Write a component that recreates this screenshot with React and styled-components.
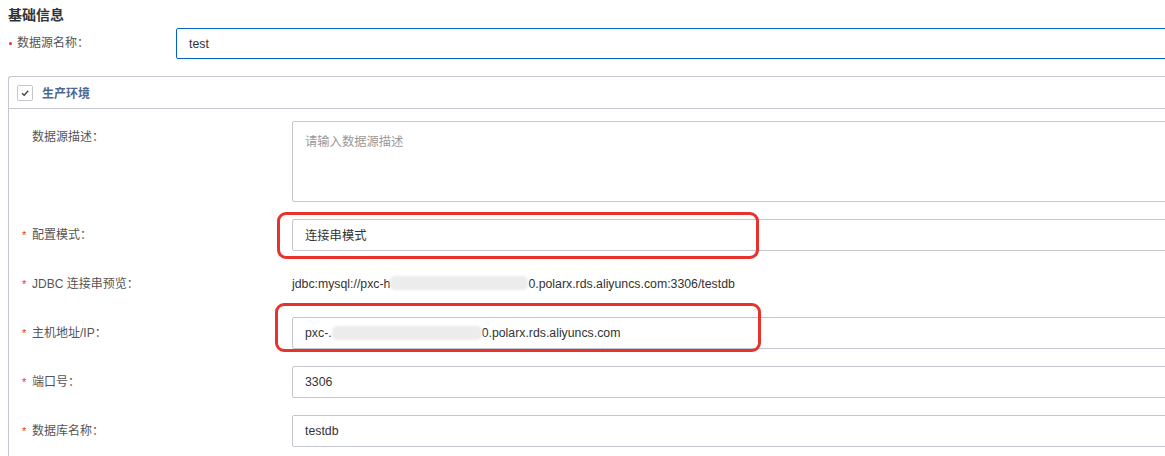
import styled, { createGlobalStyle } from 'styled-components';

const GlobalStyle = createGlobalStyle`
    html, body {
        margin: 0;
        padding: 0;
        overflow: hidden;
        background: #ffffff;
    }
    body {
        font-family: "Liberation Sans", "Noto Sans CJK SC", sans-serif;
        font-size: 12px;
        color: #333333;
    }
`;

const Page = styled.div`
    width: 1220px;
    padding: 5px 0 0 8px;
    box-sizing: border-box;
`;

const SectionTitle = styled.h3`
    margin: 0;
    font-size: 14px;
    line-height: 20px;
    font-weight: 700;
    color: #333333;
`;

const TopRow = styled.div`
    display: flex;
    align-items: flex-start;
    margin-top: 3px;
`;

const TopLabel = styled.div`
    width: 168px;
    line-height: 31px;
    color: #555555;
    display: flex;
    align-items: center;
`;

const Dot = styled.span`
    width: 3px;
    height: 3px;
    border-radius: 50%;
    background: #e8322c;
    margin: 0 5px 0 1px;
`;

const Input = styled.div`
    flex: 1;
    height: ${({ $h }) => $h || 32}px;
    box-sizing: border-box;
    border: 1px solid ${({ $focus }) => ($focus ? '#0066cc' : '#c4c6cf')};
    border-radius: 2px;
    padding: ${({ $top }) => ($top ? '10px 12px' : '0 12px')};
    display: flex;
    align-items: ${({ $top }) => ($top ? 'flex-start' : 'center')};
    font-size: 12.3px;
    color: ${({ $placeholder }) => ($placeholder ? '#999999' : '#333333')};
    background: #ffffff;
    white-space: pre;
`;

const Panel = styled.div`
    margin-top: 17px;
    border: 1px solid #c4c6cf;
    border-right: none;
    border-bottom: none;
    border-radius: 3px 0 0 0;
    padding-bottom: 20px;
`;

const PanelHeader = styled.div`
    height: 31px;
    border-bottom: 1px solid #c4c6cf;
    display: flex;
    align-items: center;
    padding-left: 8px;
    gap: 9px;
`;

const CheckBox = styled.span`
    width: 16px;
    height: 16px;
    box-sizing: border-box;
    border: 1px solid #c4c6cf;
    border-radius: 2px;
    display: flex;
    align-items: center;
    justify-content: center;
    background: #ffffff;
`;

const PanelTitle = styled.span`
    font-size: 12px;
    font-weight: 700;
    color: #4b6a93;
    font-family: "Noto Sans CJK SC", sans-serif;
`;

const PanelBody = styled.div`
    display: flex;
    flex-direction: column;
    gap: 17px;
    padding-top: 12px;
`;

const Row = styled.div`
    display: flex;
    align-items: flex-start;
`;

const Label = styled.div`
    width: 270px;
    padding-left: 13px;
    line-height: 32px;
    color: #555555;
    display: flex;
`;

const Star = styled.span`
    width: 10px;
    color: #e8322c;
    font-size: 11px;
`;

const Control = styled.div`
    flex: 1;
    position: relative;
    display: flex;
`;

const PlainText = styled.div`
    line-height: 32px;
    font-size: 12.3px;
    color: #333333;
    white-space: nowrap;
`;

const Masked = styled.span`
    display: inline-block;
    width: ${({ $w }) => $w}px;
    height: 14px;
    vertical-align: -2px;
    background: #ececec;
    border-radius: 5px;
    filter: blur(1px);
`;

const Highlight = styled.div`
    position: absolute;
    left: ${({ $l }) => $l}px;
    top: ${({ $t }) => $t}px;
    width: ${({ $w }) => $w}px;
    height: ${({ $h }) => $h}px;
    box-sizing: border-box;
    border: 3px solid #e8322c;
    border-radius: 9px;
    pointer-events: none;
`;

const Check = () => (
    <svg width="10" height="10" viewBox="0 0 10 10">
        <path d="M2 5.2 L4.2 7.3 L8.2 2.8" fill="none" stroke="#444" strokeWidth="1.4" />
    </svg>
);

const FormRow = ({ label, required, children }) => (
    <Row>
        <Label>
            <Star>{required ? '*' : ''}</Star>
            {label}
        </Label>
        <Control>{children}</Control>
    </Row>
);

const App = () => (
    <>
        <GlobalStyle />
        <Page>
            <SectionTitle>基础信息</SectionTitle>
            <TopRow>
                <TopLabel>
                    <Dot />
                    数据源名称：
                </TopLabel>
                <Input $focus $h={31}>test</Input>
            </TopRow>
            <Panel>
                <PanelHeader>
                    <CheckBox><Check /></CheckBox>
                    <PanelTitle>生产环境</PanelTitle>
                </PanelHeader>
                <PanelBody>
                    <FormRow label="数据源描述：">
                        <Input $h={81} $top $placeholder>请输入数据源描述</Input>
                    </FormRow>
                    <FormRow label="配置模式：" required>
                        <Input>连接串模式</Input>
                        <Highlight $l={-15} $t={-7} $w={482} $h={47} />
                    </FormRow>
                    <FormRow label="JDBC 连接串预览：" required>
                        <PlainText>
                            jdbc:mysql://pxc-h<Masked $w={138} />0.polarx.rds.aliyuncs.com:3306/testdb
                        </PlainText>
                    </FormRow>
                    <FormRow label="主机地址/IP：" required>
                        <Input>
                            pxc-.<Masked $w={150} />0.polarx.rds.aliyuncs.com
                        </Input>
                        <Highlight $l={-17} $t={-14} $w={486} $h={49} />
                    </FormRow>
                    <FormRow label="端口号：" required>
                        <Input>3306</Input>
                    </FormRow>
                    <FormRow label="数据库名称：" required>
                        <Input>testdb</Input>
                    </FormRow>
                </PanelBody>
            </Panel>
        </Page>
    </>
);

export default App;
